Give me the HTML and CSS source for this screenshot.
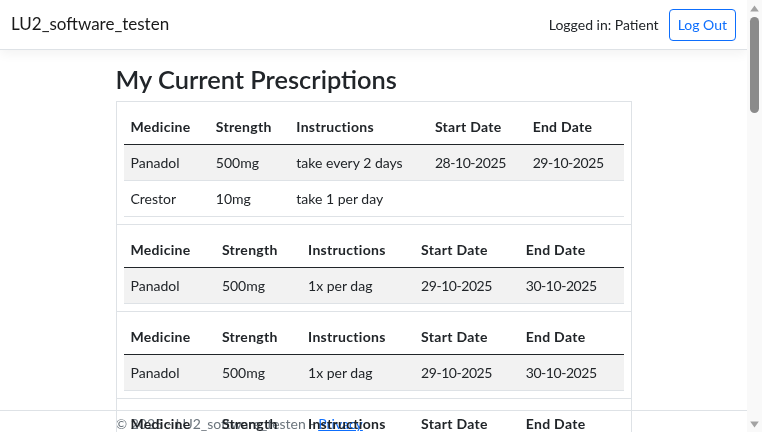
FILE: index.html
```html
<!DOCTYPE html>
<html lang="en">
<head>
<meta charset="utf-8">
<title>My Current Prescriptions - LU2_software_testen</title>
<link rel="stylesheet" href="styles.css">
</head>
<body>
<div class="page">
  <header>
    <nav class="navbar">
      <div class="navbar-inner">
        <a class="brand" href="#">LU2_software_testen</a>
        <div class="nav-right">
          <span class="user">Logged in: Patient</span>
          <button class="btn-outline" type="button">Log Out</button>
        </div>
      </div>
    </nav>
  </header>
  <main class="container">
    <h2 class="title">My Current Prescriptions</h2>
    <table class="outer">
      <tbody>
        <tr><td>
          <table class="inner">
            <thead><tr><th>Medicine</th><th>Strength</th><th>Instructions</th><th>Start Date</th><th>End Date</th></tr></thead>
            <tbody>
              <tr><td>Panadol</td><td>500mg</td><td>take every 2 days</td><td class="date">28-10-2025</td><td class="date">29-10-2025</td></tr>
              <tr><td>Crestor</td><td>10mg</td><td>take 1 per day</td><td class="date"></td><td class="date"></td></tr>
            </tbody>
          </table>
        </td></tr>
        <tr><td><table class="inner"><thead><tr><th>Medicine</th><th>Strength</th><th>Instructions</th><th>Start Date</th><th>End Date</th></tr></thead><tbody><tr><td>Panadol</td><td>500mg</td><td>1x per dag</td><td class="date">29-10-2025</td><td class="date">30-10-2025</td></tr></tbody></table></td></tr>
        <tr><td><table class="inner"><thead><tr><th>Medicine</th><th>Strength</th><th>Instructions</th><th>Start Date</th><th>End Date</th></tr></thead><tbody><tr><td>Panadol</td><td>500mg</td><td>1x per dag</td><td class="date">29-10-2025</td><td class="date">30-10-2025</td></tr></tbody></table></td></tr>
        <tr><td><table class="inner"><thead><tr><th>Medicine</th><th>Strength</th><th>Instructions</th><th>Start Date</th><th>End Date</th></tr></thead><tbody><tr><td>Panadol</td><td>500mg</td><td>1x per dag</td><td class="date">29-10-2025</td><td class="date">30-10-2025</td></tr></tbody></table></td></tr>
        <tr><td><table class="inner"><thead><tr><th>Medicine</th><th>Strength</th><th>Instructions</th><th>Start Date</th><th>End Date</th></tr></thead><tbody><tr><td>Panadol</td><td>500mg</td><td>1x per dag</td><td class="date">29-10-2025</td><td class="date">30-10-2025</td></tr></tbody></table></td></tr>
        <tr><td><table class="inner"><thead><tr><th>Medicine</th><th>Strength</th><th>Instructions</th><th>Start Date</th><th>End Date</th></tr></thead><tbody><tr><td>Panadol</td><td>500mg</td><td>1x per dag</td><td class="date">29-10-2025</td><td class="date">30-10-2025</td></tr></tbody></table></td></tr>
        <tr><td><table class="inner"><thead><tr><th>Medicine</th><th>Strength</th><th>Instructions</th><th>Start Date</th><th>End Date</th></tr></thead><tbody><tr><td>Panadol</td><td>500mg</td><td>1x per dag</td><td class="date">29-10-2025</td><td class="date">30-10-2025</td></tr></tbody></table></td></tr>
        <tr><td><table class="inner"><thead><tr><th>Medicine</th><th>Strength</th><th>Instructions</th><th>Start Date</th><th>End Date</th></tr></thead><tbody><tr><td>Panadol</td><td>500mg</td><td>1x per dag</td><td class="date">29-10-2025</td><td class="date">30-10-2025</td></tr></tbody></table></td></tr>
        <tr><td><table class="inner"><thead><tr><th>Medicine</th><th>Strength</th><th>Instructions</th><th>Start Date</th><th>End Date</th></tr></thead><tbody><tr><td>Panadol</td><td>500mg</td><td>1x per dag</td><td class="date">29-10-2025</td><td class="date">30-10-2025</td></tr></tbody></table></td></tr>
        <tr><td><table class="inner"><thead><tr><th>Medicine</th><th>Strength</th><th>Instructions</th><th>Start Date</th><th>End Date</th></tr></thead><tbody><tr><td>Panadol</td><td>500mg</td><td>1x per dag</td><td class="date">29-10-2025</td><td class="date">30-10-2025</td></tr></tbody></table></td></tr>
        <tr><td><table class="inner"><thead><tr><th>Medicine</th><th>Strength</th><th>Instructions</th><th>Start Date</th><th>End Date</th></tr></thead><tbody><tr><td>Panadol</td><td>500mg</td><td>1x per dag</td><td class="date">29-10-2025</td><td class="date">30-10-2025</td></tr></tbody></table></td></tr>
        <tr><td><table class="inner"><thead><tr><th>Medicine</th><th>Strength</th><th>Instructions</th><th>Start Date</th><th>End Date</th></tr></thead><tbody><tr><td>Panadol</td><td>500mg</td><td>1x per dag</td><td class="date">29-10-2025</td><td class="date">30-10-2025</td></tr></tbody></table></td></tr>
        <tr><td><table class="inner"><thead><tr><th>Medicine</th><th>Strength</th><th>Instructions</th><th>Start Date</th><th>End Date</th></tr></thead><tbody><tr><td>Panadol</td><td>500mg</td><td>1x per dag</td><td class="date">29-10-2025</td><td class="date">30-10-2025</td></tr></tbody></table></td></tr>
        <tr><td><table class="inner"><thead><tr><th>Medicine</th><th>Strength</th><th>Instructions</th><th>Start Date</th><th>End Date</th></tr></thead><tbody><tr><td>Panadol</td><td>500mg</td><td>1x per dag</td><td class="date">29-10-2025</td><td class="date">30-10-2025</td></tr></tbody></table></td></tr>
        <tr><td><table class="inner"><thead><tr><th>Medicine</th><th>Strength</th><th>Instructions</th><th>Start Date</th><th>End Date</th></tr></thead><tbody><tr><td>Panadol</td><td>500mg</td><td>1x per dag</td><td class="date">29-10-2025</td><td class="date">30-10-2025</td></tr></tbody></table></td></tr>
        <tr><td><table class="inner"><thead><tr><th>Medicine</th><th>Strength</th><th>Instructions</th><th>Start Date</th><th>End Date</th></tr></thead><tbody><tr><td>Panadol</td><td>500mg</td><td>1x per dag</td><td class="date">29-10-2025</td><td class="date">30-10-2025</td></tr></tbody></table></td></tr>
        <tr><td><table class="inner"><thead><tr><th>Medicine</th><th>Strength</th><th>Instructions</th><th>Start Date</th><th>End Date</th></tr></thead><tbody><tr><td>Panadol</td><td>500mg</td><td>1x per dag</td><td class="date">29-10-2025</td><td class="date">30-10-2025</td></tr></tbody></table></td></tr>
      </tbody>
    </table>
  </main>
</div>
<footer class="footer">
  <div class="container">&copy; 2025 - LU2_software_testen - <a href="#">Privacy</a></div>
</footer>
<div class="scrollbar" aria-hidden="true">
  <svg class="sb-arrow" width="9" height="7" viewBox="0 0 9 7"><path d="M4.5 0.5 L8.8 6.5 L0.2 6.5 Z" fill="#a3a3a3"/></svg>
  <div class="sb-thumb"></div>
  <div class="sb-space"></div>
  <svg class="sb-arrow" width="9" height="7" viewBox="0 0 9 7"><path d="M0.2 0.5 L8.8 0.5 L4.5 6.5 Z" fill="#a3a3a3"/></svg>
</div>
</body>
</html>
```

FILE: styles.css
```css
* {
  box-sizing: border-box;
}

html {
  font-size: 14px;
}

body {
  margin: 0;
  font-family: Lato, "Noto Sans", sans-serif;
  font-size: 14px;
  line-height: 1.5;
  color: #212529;
  background: #fff;
}

.page {
  margin-right: 15px;
  padding-bottom: 60px;
}

.navbar {
  background: #fff;
  border-bottom: 1px solid #dee2e6;
  box-shadow: 0 3.5px 10.5px rgba(0, 0, 0, 0.05);
  padding: 7px 0;
  margin-bottom: 14px;
}

.navbar-inner {
  display: flex;
  align-items: center;
  justify-content: space-between;
  padding: 0 11px 0 11px;
}

.brand {
  font-size: 17px;
  line-height: 26.25px;
  padding: 4.375px 0;
  color: rgba(0, 0, 0, 0.9);
  text-decoration: none;
}

.nav-right {
  display: flex;
  align-items: center;
  gap: 10px;
}

.user {
  color: #212529;
}

.btn-outline {
  font: inherit;
  line-height: 21px;
  color: #0d6efd;
  background: transparent;
  border: 1px solid #0d6efd;
  border-radius: 4px;
  padding: 4.5px 8px;
  cursor: pointer;
}

.container {
  width: 100%;
  max-width: 540px;
  margin: 0 auto;
  padding: 0 12px;
}

.title {
  font-size: 25.4px;
  font-weight: 600;
  line-height: 1.2;
  margin: 0 0 7px;
}

.outer {
  width: 100%;
  border-collapse: collapse;
  border: 1px solid #dee2e6;
}

.outer > tbody > tr > td {
  padding: 7px;
  border-bottom: 1px solid #dee2e6;
}

.inner {
  width: 100%;
  border-collapse: collapse;
}

.inner th,
.inner td {
  padding: 7px;
  text-align: left;
  vertical-align: top;
  border-bottom: 1px solid #dee2e6;
}

.inner thead th {
  font-weight: 700;
  letter-spacing: 0.3px;
  border-bottom: 1px solid #212529;
}

.inner td.date {
  letter-spacing: -0.45px;
}

.inner tbody tr:nth-child(odd) td {
  background: #f2f2f2;
}

.footer {
  position: fixed;
  left: 0;
  right: 15px;
  bottom: 0;
  z-index: -1;
  height: 22px;
  border-top: 1px solid #dee2e6;
  color: #6c757d;
  line-height: 26px;
  white-space: nowrap;
}

.footer a {
  color: #0d6efd;
}

.scrollbar {
  position: fixed;
  top: 0;
  right: 0;
  width: 15px;
  height: 100vh;
  background: #f9f9f9;
  display: flex;
  flex-direction: column;
  align-items: center;
  padding: 5px 0 4px;
}

.sb-arrow {
  display: block;
  flex: none;
}

.sb-thumb {
  width: 9px;
  height: 96px;
  margin-top: 5px;
  border-radius: 4.5px;
  background: #8b8b8b;
  flex: none;
}

.sb-space {
  flex: 1;
}
```
